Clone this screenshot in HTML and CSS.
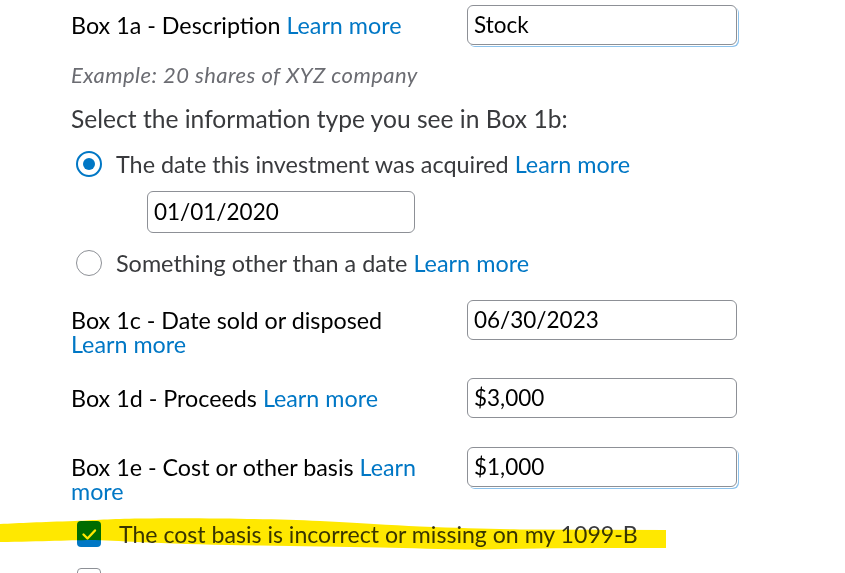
FILE: index.html
```html
<!DOCTYPE html>
<html>
<head>
<meta charset="utf-8">
<link rel="stylesheet" href="styles.css">
</head>
<body>
<div class="page">
  <div class="row row-1a">
    <div class="label">Box 1a - Description <a class="link">Learn more</a></div>
    <div class="input input-focus">Stock</div>
  </div>
  <div class="example">Example: 20 shares of XYZ company</div>
  <div class="question">Select the information type you see in Box 1b:</div>
  <div class="choice choice-1">
    <span class="radio radio-on"><span class="dot"></span></span>
    <span class="choice-text">The date this investment was acquired <a class="link">Learn more</a></span>
  </div>
  <div class="input date-input">01/01/2020</div>
  <div class="choice choice-2">
    <span class="radio"></span>
    <span class="choice-text">Something other than a date <a class="link">Learn more</a></span>
  </div>
  <div class="row row-1c">
    <div class="label">Box 1c - Date sold or disposed <a class="link">Learn more</a></div>
    <div class="input">06/30/2023</div>
  </div>
  <div class="row row-1d">
    <div class="label">Box 1d - Proceeds <a class="link">Learn more</a></div>
    <div class="input">$3,000</div>
  </div>
  <div class="row row-1e">
    <div class="label">Box 1e - Cost or other basis <a class="link">Learn more</a></div>
    <div class="input input-focus">$1,000</div>
  </div>
  <div class="check-row check-1">
    <span class="checkbox checked">
      <svg viewBox="0 0 24 26" width="24" height="26"><path d="M6.5 13.5 L10.5 17.5 L18 9.5" fill="none" stroke="#fff" stroke-width="2.4" stroke-linecap="round" stroke-linejoin="round"/></svg>
    </span>
    <span class="check-text">The cost basis is incorrect or missing on my 1099-B</span>
  </div>
  <div class="check-row check-2">
    <span class="checkbox"></span>
    <span class="check-text">I also have other adjustments</span>
  </div>
  <svg class="highlight" viewBox="0 0 670 40" width="670" height="40">
    <path d="M0 9 C20 8 40 7 75 6 C95 5 110 4 140 3.5 C170 3 190 3 220 3.5 C260 4 290 4.5 320 6 C360 8 390 10 420 11.5 C460 13 490 14 520 14.5 L666 15 L666 33 L600 33 C560 33 520 34 480 34.5 C440 34.5 410 33 380 32.5 C340 32 300 31 260 30.5 C220 30 180 29 150 27.5 C125 26.5 110 25.5 95 25 C75 25 40 26.5 0 27 Z" fill="#ffe800"/>
  </svg>
</div>
</body>
</html>
```
FILE: styles.css
```css
html, body {
  margin: 0;
  padding: 0;
  background: #ffffff;
}
body {
  font-family: "Lato", "Open Sans", sans-serif;
  color: #000000;
  width: 845px;
  height: 573px;
  overflow: hidden;
}
.page {
  position: relative;
  display: flex;
  flex-direction: column;
  align-items: flex-start;
  padding-left: 71px;
}
.link {
  color: #0077c5;
  text-decoration: none;
}
.row {
  display: flex;
  align-items: flex-start;
}
.label {
  width: 360px;
  margin-right: 36px;
  padding-top: 8px;
  font-size: 23.3px;
  line-height: 24px;
  color: #000;
}
.input {
  box-sizing: border-box;
  width: 270px;
  height: 40px;
  border: 1px solid #8d9096;
  border-radius: 6px;
  padding-left: 6px;
  font-size: 22.5px;
  line-height: 38px;
  color: #000;
  background: #fff;
}
.input-focus {
  box-shadow: 1px 1px 0 0 #fff, 2px 2px 0 0 #8cc2ec;
}
.row-1a { margin-top: 5px; }
.example {
  margin-top: 18px;
  font-size: 22px;
  letter-spacing: 0.45px;
  line-height: 24px;
  font-style: italic;
  color: #6b6c72;
}
.question {
  margin-top: 20px;
  font-size: 24.6px;
  line-height: 24px;
  color: #393a3d;
}
.choice {
  display: flex;
  align-items: center;
  height: 26px;
}
.choice-1 { margin-top: 20px; }
.choice-2 { margin-top: 17px; }
.radio {
  box-sizing: border-box;
  width: 26px;
  height: 26px;
  margin-left: 5px;
  margin-right: 14px;
  border-radius: 50%;
  border: 1px solid #8d9096;
  display: flex;
  align-items: center;
  justify-content: center;
}
.radio-on {
  border: 2px solid #0077c5;
}
.dot {
  width: 12px;
  height: 12px;
  border-radius: 50%;
  background: #0077c5;
}
.choice-text {
  font-size: 23.4px;
  line-height: 26px;
  color: #393a3d;
}
.date-input {
  margin-top: 14px;
  margin-left: 76px;
  width: 268px;
  height: 42px;
  line-height: 40px;
}
.row-1c { margin-top: 24px; }
.row-1d { margin-top: 22px; }
.row-1e { margin-top: 29px; }
.check-row {
  display: flex;
  align-items: center;
  height: 26px;
}
.check-1 { margin-top: 18px; }
.check-2 { margin-top: 21px; }
.checkbox {
  box-sizing: border-box;
  width: 24px;
  height: 26px;
  margin-left: 6px;
  margin-right: 18px;
  border-radius: 4px;
  border: 1px solid #8d9096;
  background: #fff;
  display: flex;
}
.checkbox.checked {
  border: none;
  background: #0077c5;
}
.check-text {
  font-size: 23.1px;
  line-height: 26px;
  color: #393a3d;
}
.highlight {
  position: absolute;
  left: 0;
  top: 515px;
  mix-blend-mode: multiply;
  pointer-events: none;
}
```
